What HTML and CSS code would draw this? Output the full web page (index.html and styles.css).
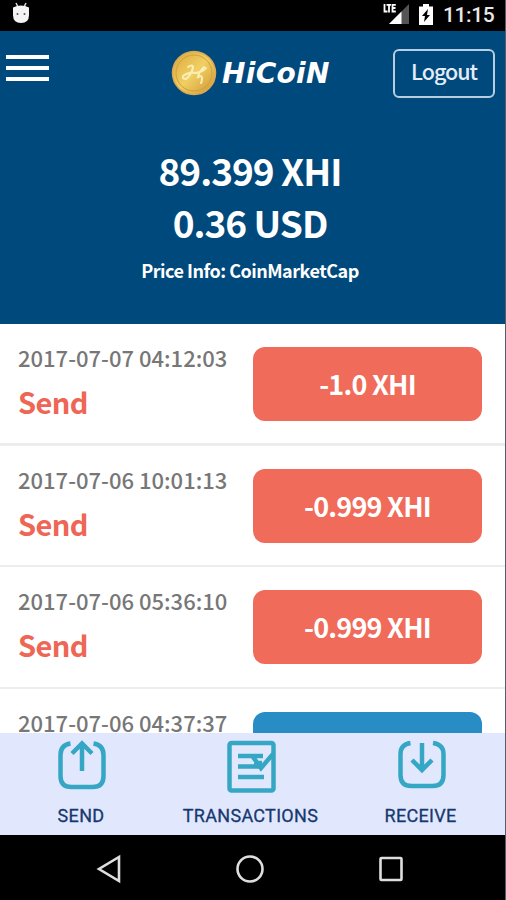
FILE: index.html
```html
<!DOCTYPE html>
<html lang="en">
<head>
<meta charset="utf-8">
<title>HiCoiN Wallet</title>
<link rel="stylesheet" href="styles.css">
</head>
<body>
<div class="screen">
  <div class="status">
    <svg class="droid" width="18" height="22" viewBox="0 0 18 22"><path d="M4 1l2 4M14 1l-2 4" stroke="#ddd" stroke-width="1.5"/><path d="M1 5.5Q5 3.5 9 3.5T17 5.500V13q0 8-8 8T1 13z" fill="#f4f4f4"/><circle cx="5.500" cy="12" r="1" fill="#555"/><circle cx="12.500" cy="12" r="1" fill="#555"/></svg>
    <div class="status-right">
      <svg class="signal" width="28" height="24" viewBox="0 0 28 24"><path d="M7 22L27 2v20z" fill="#555"/><path d="M7 22L19.500 9.500v12.500z" fill="#fff"/><path d="M2.500 2v7.500h3M4.500 2.800h4.500M7 2.500v8M13.800 2.800H10.500v6.700h3.300M10.500 6h3" fill="none" stroke="#fff" stroke-width="1.800"/></svg>
      <svg class="battery" width="16" height="22" viewBox="0 0 16 22"><path d="M5 0h6v2.500h4V21H1V2.500h4z" fill="#fff"/><path d="M10 5L4 12h3l-1 6 6-7H9z" fill="#000"/></svg>
      <span class="clock">11:15</span>
    </div>
  </div>
  <header class="hero">
    <div class="topbar">
      <div class="menu"><i></i><i></i><i></i></div>
      <div class="brand">
        <svg class="coin" width="46" height="46" viewBox="0 0 46 46"><defs><linearGradient id="gold" x1="0" y1="0" x2="1" y2="1"><stop offset="0" stop-color="#dba63c"/><stop offset=".5" stop-color="#f0cf62"/><stop offset="1" stop-color="#cf9434"/></linearGradient></defs><circle cx="23" cy="23" r="21.500" fill="url(#gold)" stroke="#d9aa50" stroke-width="1.500"/><circle cx="23" cy="23" r="18" fill="none" stroke="#d0a040" stroke-width="1"/><path d="M17 17q5-3 5 0-1 7-7 12-4 0-3-3 5-4 13-3 6-1 10-5M33 17q-5 5-6 10 4-2 4 1 0 3-1 5" fill="none" stroke="#fbeeb5" stroke-width="2" stroke-linecap="round"/></svg>
        <span class="name">HiCoiN</span>
      </div>
      <button class="logout">Logout</button>
    </div>
    <div class="amount">89.399 XHI</div>
    <div class="amount">0.36 USD</div>
    <div class="price">Price Info: CoinMarketCap</div>
  </header>
  <main class="list">
    <section class="row"><div><div class="date">2017-07-07 04:12:03</div><div class="kind">Send</div></div><div class="pill">-1.0 XHI</div></section>
    <section class="row"><div><div class="date">2017-07-06 10:01:13</div><div class="kind">Send</div></div><div class="pill">-0.999 XHI</div></section>
    <section class="row"><div><div class="date">2017-07-06 05:36:10</div><div class="kind">Send</div></div><div class="pill">-0.999 XHI</div></section>
    <section class="row"><div><div class="date">2017-07-06 04:37:37</div></div><div class="pill blue"></div></section>
  </main>
  <nav class="tabs">
    <div class="tab send"><svg width="52" height="54" viewBox="0 0 52 54"><path d="M15.500 4.500C9 5.500 5.500 9.500 5.500 16V37q0 11 11 11H37.500q11 0 11-11V16C48.500 9.500 45 5.500 38.500 4.500M27 32V4M17 14.500L27 4.500l10 10"/></svg><span>SEND</span></div>
    <div class="tab trans"><svg width="52" height="54" viewBox="0 0 52 54"><rect x="4.500" y="4" width="44" height="47.500" rx="2"/><path d="M13 17H38M13 27.500H34M13 38H39M28 18l8 11L48 15M29 24h8"/></svg><span>TRANSACTIONS</span></div>
    <div class="tab receive"><svg width="52" height="54" viewBox="0 0 52 54"><path d="M15.500 4C9 5 5.500 9 5.500 15V36q0 11 11 11H37.500q11 0 11-11V15C48.500 9 45 5 38 4M27 4V31M17 21l10 10 10-10"/></svg><span>RECEIVE</span></div>
  </nav>
  <footer class="nav">
    <svg width="28" height="30" viewBox="0 0 28 30"><path d="M24 3V27L4 15z"/></svg>
    <svg width="30" height="30" viewBox="0 0 30 30"><circle cx="15" cy="15" r="12.500"/></svg>
    <svg width="28" height="30" viewBox="0 0 28 30"><rect x="3.500" y="4" width="21" height="22" rx="1"/></svg>
  </footer>
</div>
</body>
</html>
```
FILE: styles.css
```css
* { box-sizing: border-box; }
body { margin: 0; }
.screen {
  width: 506px; height: 900px; overflow: hidden;
  display: flex; flex-direction: column;
  background: #fff; border-right: 1px solid #52606b;
  font-family: "Noto Sans CJK JP", "Noto Sans", sans-serif;
}
svg { display: block; flex: none; }
.status { height: 31px; flex: none; background: #000; display: flex; justify-content: space-between; padding: 2px 11px 0 12px; }
.status-right { display: flex; }
.signal { margin-right: 8px; }
.battery { margin: 2px 9px 0 0; }
.clock { font: 500 21px/26px Roboto, sans-serif; color: #e8e8e8; width: 51px; white-space: nowrap; letter-spacing: -.4px; }
.hero { height: 293px; flex: none; background: #00497d; color: #fff; text-align: center; }
.topbar { height: 115px; display: flex; align-items: flex-start; justify-content: space-between; padding: 18px 10px 0 6px; }
.menu { width: 43px; padding-top: 6px; display: flex; flex-direction: column; gap: 7px; }
.menu i { height: 4px; background: #fff; }
.brand { display: flex; align-items: center; margin-left: 59px; }
.name { font: italic 700 28px/46px "DejaVu Sans", sans-serif; padding-top: 2px; margin-left: 5px; width: 108px; white-space: nowrap; text-align: left; letter-spacing: .3px; }
.logout { width: 102px; height: 49px; padding: 0 0 6px; border: 2px solid #b8cde0; border-radius: 6px; background: none; color: #e4edf7; font: 500 21.500px/39px "Noto Sans CJK JP", sans-serif; letter-spacing: -1px; }
.amount { height: 52px; font-weight: 700; font-size: 37px; line-height: 49px; white-space: nowrap; padding-right: 5px; letter-spacing: -1px; }
.price { font-weight: 700; font-size: 18px; line-height: 40px; padding-right: 5px; letter-spacing: -.5px; }
.list { height: 409px; flex: none; overflow: hidden; }
.row { height: 121.700px; border-bottom: 2px solid #ededed; display: flex; justify-content: space-between; padding: 23px 23px 0 18px; }
.row:first-child { border-bottom-width: 3px; }
.date { font-size: 22px; line-height: 20px; font-weight: 500; color: #777; white-space: nowrap; }
.kind { font-size: 29px; line-height: 40px; margin-top: 14px; font-weight: 700; color: #ee6655; letter-spacing: -.6px; }
.pill { width: 229px; height: 74px; border-radius: 12px; background: #f06b5a; color: #fff; text-align: center; font-size: 27px; line-height: 74px; font-weight: 700; white-space: nowrap; letter-spacing: -.8px; }
.blue { background: #278dc4; }
.tabs { height: 102px; flex: none; background: #e1e8fe; display: flex; }
.tab { display: flex; flex-direction: column; align-items: center; padding-top: 6px; font: 400 18px/24px Roboto, sans-serif; color: #17386f; -webkit-text-stroke: .3px #17386f; letter-spacing: .3px; }
.tab svg { fill: none; stroke: #35a6c4; stroke-width: 4.500; }
.tab span { margin-top: 11px; }
.send { width: 162px; }
.trans { width: 177px; }
.receive { width: 163px; }
.nav { flex: 1; background: #000; display: flex; align-items: flex-start; justify-content: space-between; padding: 19px 100px 0 95px; }
.nav svg { fill: none; stroke: #dedede; stroke-width: 2.600; }
```
